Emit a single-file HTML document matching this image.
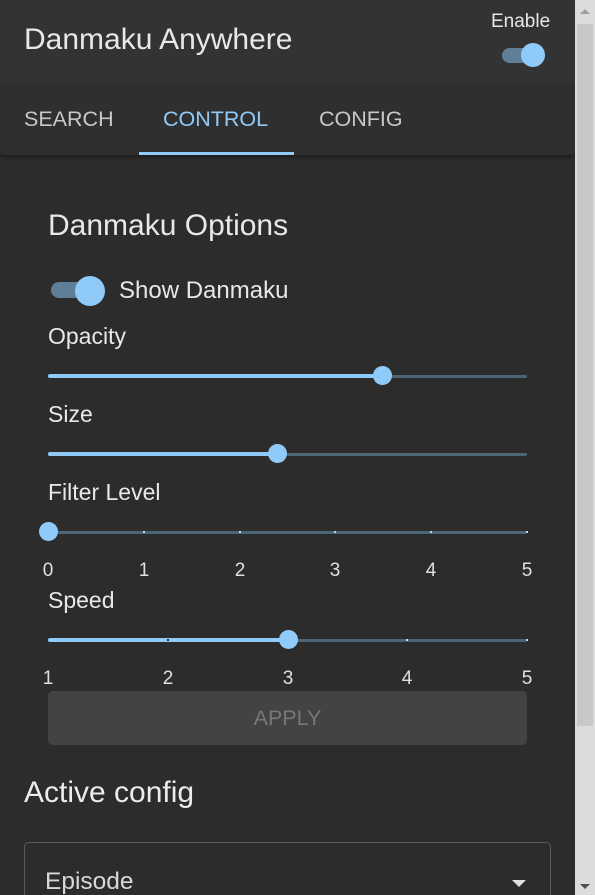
<!DOCTYPE html>
<html style="height:895px;overflow:hidden"><head><style>
*{margin:0;padding:0;box-sizing:border-box}
body{width:595px;height:895px;background:#2c2c2c;font-family:"Liberation Sans",sans-serif;color:#e6e6e6;position:relative;overflow:hidden}
.a{position:absolute;white-space:nowrap}
.track{position:absolute;left:48px;width:479px;height:3px;background:#4c6577;border-radius:2px}
.act{position:absolute;left:48px;height:4px;background:#90caf9;border-radius:2px}
.thumb{position:absolute;width:19px;height:19px;border-radius:50%;background:#90caf9}
.tick{position:absolute;width:2px;height:2px;background:#b8d8f0}
.lbl{position:absolute;font-size:23px;color:#e8e8e8;white-space:nowrap}
.num{position:absolute;font-size:19px;color:#e0e0e0;transform:translateX(-50%)}
</style></head><body>
<div class="a" style="left:0;top:0;width:575px;height:83px;background:#333"></div>
<div class="a" style="left:24px;top:23px;font-size:30px;color:#e8e8e8">Danmaku Anywhere</div>
<div class="a" style="left:491px;top:11px;font-size:19px;color:#e8e8e8">Enable</div>
<div class="a" style="left:502px;top:48px;width:34px;height:15px;border-radius:8px;background:#5f7f98"></div>
<div class="a" style="left:521px;top:43px;width:24px;height:24px;border-radius:50%;background:#90caf9"></div>
<div class="a" style="left:0;top:83px;width:575px;height:72px;background:#2f2f2f;box-shadow:0 2px 4px rgba(0,0,0,.4);border-radius:0 0 4px 4px"></div>
<div class="a" style="left:24px;top:107px;font-size:21.5px;color:#c8c8c8">SEARCH</div>
<div class="a" style="left:163px;top:107px;font-size:21.5px;color:#90caf9">CONTROL</div>
<div class="a" style="left:319px;top:107px;font-size:21.5px;color:#c8c8c8">CONFIG</div>
<div class="a" style="left:139px;top:152px;width:155px;height:3px;background:#90caf9"></div>

<div class="a" style="left:48px;top:209px;font-size:30px;color:#e8e8e8">Danmaku Options</div>
<div class="a" style="left:51px;top:282px;width:36px;height:16px;border-radius:8px;background:#5f7f98"></div>
<div class="a" style="left:75px;top:276px;width:30px;height:30px;border-radius:50%;background:#90caf9"></div>
<div class="lbl" style="left:119px;top:277px;font-size:24px">Show Danmaku</div>

<div class="lbl" style="left:48px;top:323px">Opacity</div>
<div class="track" style="top:375px"></div><div class="act" style="top:374px;width:334px"></div>
<div class="thumb" style="left:373px;top:366px"></div>

<div class="lbl" style="left:48px;top:401px">Size</div>
<div class="track" style="top:453px"></div><div class="act" style="top:452px;width:229px"></div>
<div class="thumb" style="left:268px;top:444px"></div>

<div class="lbl" style="left:48px;top:479px">Filter Level</div>
<div class="track" style="top:531px"></div>
<div class="tick" style="left:143px;top:531px"></div><div class="tick" style="left:239px;top:531px"></div><div class="tick" style="left:334px;top:531px"></div><div class="tick" style="left:430px;top:531px"></div><div class="tick" style="left:526px;top:531px"></div>
<div class="thumb" style="left:39px;top:522px"></div>
<div class="num" style="left:48px;top:560px">0</div><div class="num" style="left:144px;top:560px">1</div><div class="num" style="left:240px;top:560px">2</div><div class="num" style="left:335px;top:560px">3</div><div class="num" style="left:431px;top:560px">4</div><div class="num" style="left:527px;top:560px">5</div>

<div class="lbl" style="left:48px;top:587px">Speed</div>
<div class="track" style="top:639px"></div><div class="act" style="top:638px;width:240px"></div>
<div class="tick" style="left:167px;top:639px;background:#2c2c2c"></div><div class="tick" style="left:406px;top:639px"></div><div class="tick" style="left:526px;top:639px"></div>
<div class="thumb" style="left:279px;top:630px"></div>
<div class="num" style="left:48px;top:668px">1</div><div class="num" style="left:168px;top:668px">2</div><div class="num" style="left:288px;top:668px">3</div><div class="num" style="left:407px;top:668px">4</div><div class="num" style="left:527px;top:668px">5</div>

<div class="a" style="left:48px;top:691px;width:479px;height:54px;background:#434343;border-radius:5px;text-align:center;line-height:54px;font-size:21.5px;color:#777">APPLY</div>

<div class="a" style="left:24px;top:776px;font-size:30px;color:#ececec">Active config</div>
<div class="a" style="left:24px;top:842px;width:527px;height:70px;border:1px solid #5a5a5a;border-radius:5px"></div>
<div class="a" style="left:45px;top:868px;font-size:24.5px;color:#d8d8d8">Episode</div>
<div class="a" style="left:512px;top:880px;width:0;height:0;border-left:7px solid transparent;border-right:7px solid transparent;border-top:7px solid #e0e0e0"></div>

<div class="a" style="left:575px;top:0;width:20px;height:895px;background:#dcdcdc"></div>
<div class="a" style="left:577px;top:24px;width:16px;height:702px;background:#c8c8c8"></div>
<div class="a" style="left:580px;top:9px;width:0;height:0;border-left:5px solid transparent;border-right:5px solid transparent;border-bottom:5px solid #a0a0a0"></div>
<div class="a" style="left:580px;top:884px;width:0;height:0;border-left:5px solid transparent;border-right:5px solid transparent;border-top:5px solid #505050"></div>
</body></html>
